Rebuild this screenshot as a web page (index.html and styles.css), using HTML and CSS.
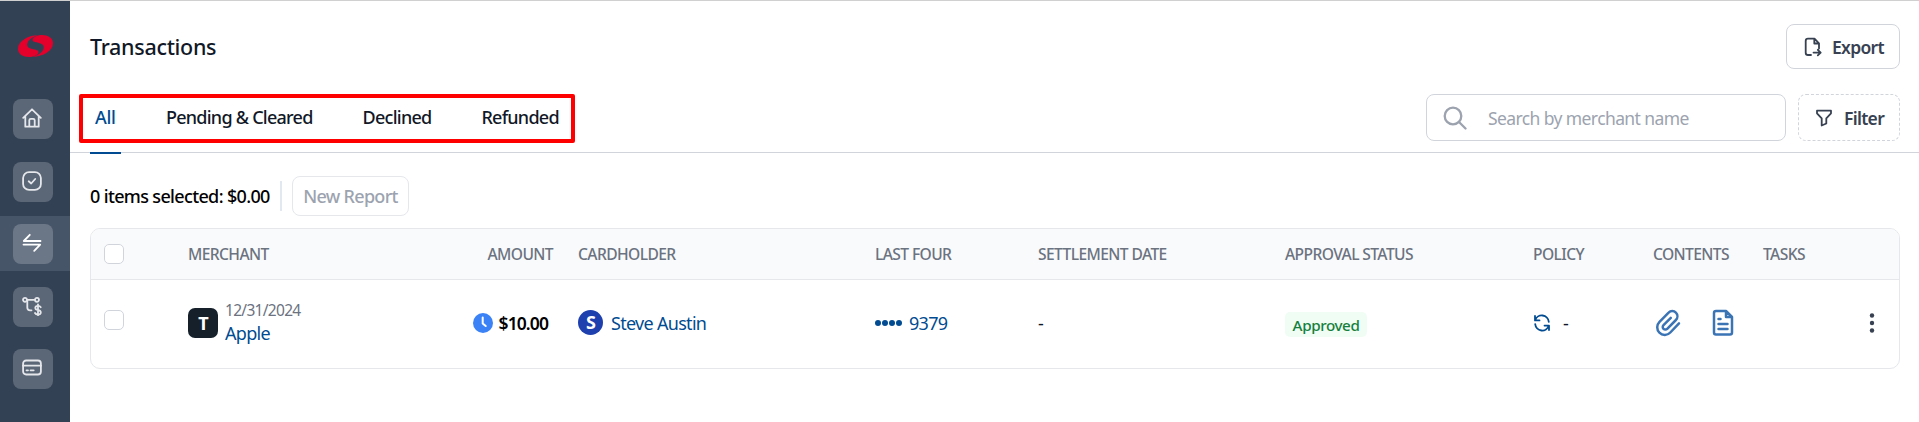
FILE: index.html
```html
<!DOCTYPE html>
<html lang="en">
<head>
  <meta charset="UTF-8">
  <meta name="viewport" content="width=device-width, initial-scale=1.0">
  <title>Transactions</title>
  <link rel="stylesheet" href="styles.css">
</head>
<body>
  <div class="app">
    <nav class="sidebar">
      <svg class="logo" width="35" height="22" viewBox="0 0 35 22">
        <path d="M20 .3C10 .5 0 6 0 14c0 5 5 8 11 8 5 0 9.500-2.500 9.500-4.800C20.500 15 18 15 14 14c-4-1-5.500-3-4.500-6C10.500 5 14 2 20 .3z"/>
        <path transform="rotate(180 17.5 11)" d="M20 .3C10 .5 0 6 0 14c0 5 5 8 11 8 5 0 9.500-2.500 9.500-4.800C20.500 15 18 15 14 14c-4-1-5.500-3-4.500-6C10.500 5 14 2 20 .3z"/>
      </svg>
      <a class="nav-item">
        <span class="nav-icon">
          <svg width="20" height="20" viewBox="0 0 20 20"><path d="M1.200 9.800 10 1.300l8.800 8.500M3.300 8.200v10.500h13.400V8.200M7.300 18.500v-6.200q0-1.500 1.500-1.500h2.400q1.500 0 1.500 1.500v6.200"/></svg>
        </span>
      </a>
      <a class="nav-item">
        <span class="nav-icon">
          <svg width="20" height="20" viewBox="0 0 20 20"><rect x="1.100" y="1.100" width="17.800" height="17.800" rx="6"/><path d="M6.700 10.300 9.200 12.500l4-4.500"/></svg>
        </span>
      </a>
      <a class="nav-item active">
        <span class="nav-icon">
          <svg width="20" height="20" viewBox="0 0 20 20"><path d="M18.500 8H1.800L7.800 1.800M1.500 11.600h16.700L12.200 17.800"/></svg>
        </span>
      </a>
      <a class="nav-item">
        <span class="nav-icon">
          <svg width="20" height="20" viewBox="0 0 20 20"><circle cx="3" cy="3.800" r="2"/><circle cx="15" cy="3.800" r="2"/><path d="M5 3.800h8M5.300 5v6.500q0 2.800 2.800 2.800h1.400"/><path d="M18.700 11.200q-.7-1.400-2.700-1.400-2.700 0-2.700 2t2.700 2.300q2.800.3 2.800 2.400t-2.800 2q-2.300 0-3-1.500M16 8.300v11.400"/></svg>
        </span>
      </a>
      <a class="nav-item">
        <span class="nav-icon">
          <svg width="20" height="20" viewBox="0 0 20 20"><rect x="1.100" y="2.500" width="17.800" height="14" rx="3"/><path d="M1 7.700h18M4.500 12.300h1.500M8.500 12.300h3.200"/></svg>
        </span>
      </a>
    </nav>

    <main class="main">
      <header class="page-header">
        <h1>Transactions</h1>
        <button class="btn btn-export">
          <svg width="18" height="20" viewBox="0 0 18 20"><path d="M7 18H4q-2.300 0-2.300-2.300V4Q1.700 1.700 4 1.700h6.500L15 6.300v5.200M10.300 2v4.500h4.500M9.500 15.600h7M13.800 12.800l2.900 2.800-2.900 2.800"/></svg>
          <span>Export</span>
        </button>
      </header>

      <section class="toolbar">
        <div class="tabs">
          <a class="tab selected">All</a>
          <a class="tab">Pending &amp; Cleared</a>
          <a class="tab">Declined</a>
          <a class="tab">Refunded</a>
          <div class="highlight"></div>
        </div>
        <div class="search">
          <svg width="24" height="24" viewBox="0 0 24 24"><circle cx="10" cy="10" r="8.300"/><path d="m16 16 6.500 6.500"/></svg>
          <span>Search by merchant name</span>
        </div>
        <button class="btn btn-filter">
          <svg width="18" height="18" viewBox="0 0 18 18"><path d="M2 1.700h14v2.600l-4.700 5v5.200l-4.600 2V9.300L2 4.300z"/></svg>
          <span>Filter</span>
        </button>
      </section>

      <section class="selection">
        <span class="selected-text">0 items selected: $0.00</span>
        <span class="divider"></span>
        <button class="btn-report">New Report</button>
      </section>

      <div class="table">
        <div class="row head">
          <div><span class="checkbox"></span></div>
          <div>MERCHANT</div>
          <div class="right">AMOUNT</div>
          <div>CARDHOLDER</div>
          <div>LAST FOUR</div>
          <div>SETTLEMENT DATE</div>
          <div>APPROVAL STATUS</div>
          <div>POLICY</div>
          <div>CONTENTS</div>
          <div>TASKS</div>
          <div></div>
        </div>
        <div class="row body">
          <div><span class="checkbox up"></span></div>
          <div class="merchant">
            <span class="merchant-logo">T</span>
            <div class="merchant-info">
              <span class="date">12/31/2024</span>
              <a class="link">Apple</a>
            </div>
          </div>
          <div class="amount">
            <svg width="20" height="20" viewBox="0 0 20 20"><circle cx="10" cy="10" r="10" fill="#3b82f6"/><path d="M9.700 4.500v6l3 2.500" fill="none" stroke="#fff" stroke-width="2" stroke-linecap="round" stroke-linejoin="round"/></svg>
            <span>$10.00</span>
          </div>
          <div class="cardholder">
            <span class="avatar">S</span>
            <a class="link">Steve Austin</a>
          </div>
          <div class="last-four">
            <span class="dots"><i></i><i></i><i></i><i></i></span>
            <a class="link">9379</a>
          </div>
          <div>-</div>
          <div><span class="badge">Approved</span></div>
          <div class="policy">
            <svg width="18" height="18" viewBox="0 0 18 18"><path d="M2 1.900v4.500h4.500M2.200 6.200A7 7 0 0 1 15.800 7.800M16 16.100v-4.500h-4.500M15.800 11.800A7 7 0 0 1 2.200 10.200"/></svg>
            <span>-</span>
          </div>
          <div class="contents">
            <svg width="26" height="28" viewBox="0 0 26 28"><path d="m24 14.400-8.700 9.100a7.500 7.500 0 0 1-10.900.2 7.800 7.800 0 0 1 .1-10.900l9.100-9.100a5 5 0 0 1 7.300 0 5.200 5.200 0 0 1 0 7.300l-8.700 8.800a2.600 2.600 0 0 1-3.700 0 2.600 2.600 0 0 1 0-3.700l7.300-7.300"/></svg>
            <svg width="22" height="28" viewBox="0 0 22 28"><path d="M14 2H4Q2 2 2 4v19.500q0 2 2 2h14q2 0 2-2V8zM14 2v6h6M6.500 10h2M6.500 15h9M6.500 20h9"/></svg>
          </div>
          <div></div>
          <div class="menu">
            <svg width="6" height="20" viewBox="0 0 6 20"><circle cx="3" cy="2.500" r="2.200"/><circle cx="3" cy="10" r="2.200"/><circle cx="3" cy="17.500" r="2.200"/></svg>
          </div>
        </div>
      </div>
    </main>
  </div>
</body>
</html>
```

FILE: styles.css
```css
* {
  box-sizing: border-box;
}

body {
  margin: 0;
  background: #fff;
  font-family: "Noto Sans", "Open Sans", sans-serif;
  font-size: 18px;
  letter-spacing: -0.7px;
  color: #111827;
  overflow: hidden;
}

svg {
  display: block;
  flex: none;
}

button {
  font: inherit;
  letter-spacing: inherit;
  background: #fff;
}

.app {
  display: flex;
  height: 422px;
  border-top: 1px solid #d0d0d0;
}

/* sidebar */
.sidebar {
  width: 70px;
  background: #334155;
  display: flex;
  flex-direction: column;
  align-items: center;
  flex: none;
}

.logo {
  margin: 34px 0;
  fill: #e4002b;
}

.nav-item {
  width: 100%;
  height: 55px;
  margin-bottom: 7.5px;
  padding: 8px 0 0 13px;
  flex: none;
}

.nav-item.active {
  background: #475569;
}

.nav-icon {
  width: 40px;
  height: 40px;
  border-radius: 8px;
  background: rgba(255, 255, 255, 0.2);
  display: flex;
  align-items: center;
  justify-content: center;
  padding: 0 2px 2px 0;
}

.nav-icon svg {
  fill: none;
  stroke: #e5e7eb;
  stroke-width: 1.8;
  stroke-linecap: round;
  stroke-linejoin: round;
}

.nav-item.active svg {
  stroke: #fff;
}

/* header */
.main {
  flex: 1;
  min-width: 0;
}

.page-header {
  display: flex;
  justify-content: space-between;
  padding: 23px 19px 0 20px;
  height: 92px;
}

h1 {
  margin: 0;
  font-size: 21.5px;
  font-weight: 500;
  line-height: 45px;
  letter-spacing: -0.3px;
}

.btn {
  display: flex;
  align-items: center;
  border: 1px solid #d1d5db;
  border-radius: 8px;
  color: #374151;
  font-size: 17.5px;
  font-weight: 600;
  padding: 0 0 0 17px;
  gap: 10px;
  white-space: nowrap;
}

.btn svg {
  fill: none;
  stroke: #374151;
  stroke-width: 1.8;
  stroke-linecap: round;
  stroke-linejoin: round;
}

.btn-export {
  width: 114px;
  height: 45px;
}

.btn-filter {
  width: 102px;
  height: 47px;
  margin: 1px 19px 0 12px;
  padding-left: 16px;
  gap: 11px;
  border-style: dashed;
}

/* tabs and search */
.toolbar {
  display: flex;
  height: 60px;
  border-bottom: 1px solid #d1d5db;
}

.tabs {
  position: relative;
  flex: 1;
  display: flex;
  padding-left: 20px;
}

.tab {
  height: 61px;
  line-height: 49px;
  padding: 0 5px;
  margin-right: 40px;
  font-weight: 500;
  letter-spacing: -0.75px;
  white-space: nowrap;
}

.selected {
  color: #004b91;
  width: 31px;
  letter-spacing: -0.3px;
  border-bottom: 2px solid #004b91;
}

.highlight {
  position: absolute;
  left: 9px;
  top: 0.500px;
  width: 496px;
  height: 49px;
  border: 4px solid #f00;
  border-radius: 2px;
}

.search {
  width: 360px;
  height: 47px;
  margin-top: 1px;
  border: 1px solid #d1d5db;
  border-radius: 8px;
  display: flex;
  align-items: center;
  padding-left: 16px;
  gap: 21px;
  font-size: 17.5px;
  letter-spacing: -0.6px;
  color: #9ca3af;
}

.search svg {
  fill: none;
  stroke: #9ca3af;
  stroke-width: 2.3;
  stroke-linecap: round;
}

/* selection bar */
.selection {
  display: flex;
  align-items: center;
  padding: 23px 0 12px 20px;
}

.selected-text {
  width: 190px;
  font-weight: 500;
  letter-spacing: -0.65px;
  color: #000;
  white-space: nowrap;
}

.divider {
  width: 2px;
  height: 30px;
  background: #e2e8f0;
  margin-right: 10px;
}

.btn-report {
  width: 117px;
  height: 40px;
  border: 1px solid #e5e7eb;
  border-radius: 8px;
  padding: 0;
  color: #9ca3af;
  font-weight: 500;
}

/* table */
.table {
  margin: 0 19px 0 20px;
  border: 1px solid #e5e7eb;
  border-radius: 10px;
  overflow: hidden;
}

.row {
  display: grid;
  grid-template-columns: 97px 291px 99px 297px 163px 247px 248px 120px 110px 88px 1fr;
  align-items: center;
  white-space: nowrap;
}

.head {
  height: 51px;
  background: #f9fafb;
  border-bottom: 1px solid #e5e7eb;
  color: #6b7280;
  font-size: 15.6px;
  font-weight: 500;
  letter-spacing: -0.6px;
  line-height: 22px;
}

.body {
  height: 88px;
  padding-bottom: 3px;
}

.right {
  padding-right: 25px;
  text-align: right;
}

.checkbox {
  display: block;
  width: 20px;
  height: 20px;
  margin-left: 13px;
  border: 1px solid #d1d5db;
  border-radius: 5px;
  background: #fff;
}

.up {
  margin-top: -5px;
}

.link {
  color: #004b91;
}

.merchant {
  display: flex;
  align-items: center;
}

.merchant-logo {
  width: 30px;
  height: 30px;
  border-radius: 7px;
  background: #15202b;
  color: #fff;
  font-weight: 700;
  line-height: 30px;
  text-align: center;
  margin-right: 7px;
}

.merchant-info {
  display: flex;
  flex-direction: column;
  line-height: 23px;
  margin-top: -2px;
}

.date {
  font-size: 15.5px;
  color: #6b7280;
}

.amount {
  display: flex;
  justify-content: flex-end;
  align-items: center;
  gap: 6px;
  padding-right: 30px;
  color: #000;
  font-size: 17.5px;
  font-weight: 600;
  letter-spacing: -0.9px;
}

.cardholder,
.last-four,
.policy,
.contents {
  display: flex;
  align-items: center;
}

.avatar {
  width: 25px;
  height: 25px;
  border-radius: 50%;
  background: #1e40af;
  color: #fff;
  font-weight: 700;
  line-height: 25px;
  text-align: center;
  margin: -1px 8px 0 0;
}

.dots {
  display: flex;
  gap: 1px;
  margin-right: 7px;
}

.dots i {
  width: 6px;
  height: 6px;
  border-radius: 50%;
  background: #004b91;
}

.badge {
  display: block;
  width: 82px;
  height: 25px;
  margin-top: 3px;
  border-radius: 5px;
  background: #f0fdf4;
  color: #15803d;
  font-size: 15.2px;
  font-weight: 500;
  letter-spacing: -0.4px;
  line-height: 26px;
  text-align: center;
}

.policy svg,
.contents svg {
  fill: none;
  stroke: #004b91;
  stroke-width: 1.8;
  stroke-linecap: round;
  stroke-linejoin: round;
}

.policy {
  gap: 12px;
}

.contents {
  gap: 31px;
  padding-left: 2px;
}

.contents svg {
  stroke: #3b74b5;
  stroke-width: 2.500;
}

.menu {
  padding-left: 18px;
  fill: #374151;
}
```
